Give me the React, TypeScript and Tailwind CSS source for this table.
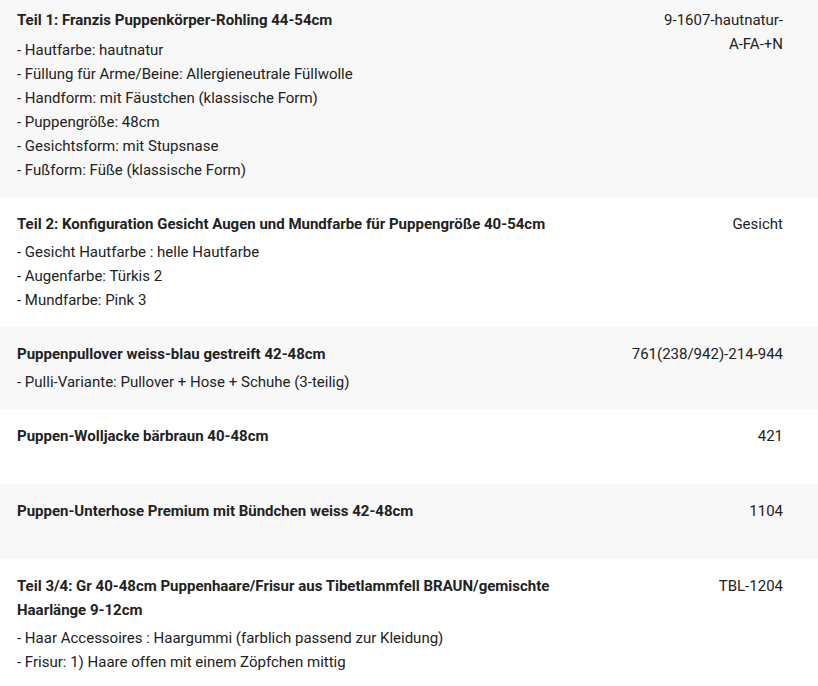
import React from "react";

type Row = { title: string; items: string[]; code: string; first?: boolean; nowrap?: boolean };

const rows: Row[] = [
  {
    title: "Teil 1: Franzis Puppenkörper-Rohling 44-54cm",
    items: [
      "- Hautfarbe: hautnatur",
      "- Füllung für Arme/Beine: Allergieneutrale Füllwolle",
      "- Handform: mit Fäustchen (klassische Form)",
      "- Puppengröße: 48cm",
      "- Gesichtsform: mit Stupsnase",
      "- Fußform: Füße (klassische Form)",
    ],
    code: "9-1607-hautnatur-A-FA-+N",
    first: true,
  },
  {
    title: "Teil 2: Konfiguration Gesicht Augen und Mundfarbe für Puppengröße 40-54cm",
    items: ["- Gesicht Hautfarbe : helle Hautfarbe", "- Augenfarbe: Türkis 2", "- Mundfarbe: Pink 3"],
    code: "Gesicht",
  },
  {
    title: "Puppenpullover weiss-blau gestreift 42-48cm",
    items: ["- Pulli-Variante: Pullover + Hose + Schuhe (3-teilig)"],
    code: "761(238/942)-214-944",
    nowrap: true,
  },
  { title: "Puppen-Wolljacke bärbraun 40-48cm", items: [], code: "421" },
  { title: "Puppen-Unterhose Premium mit Bündchen weiss 42-48cm", items: [], code: "1104" },
  {
    title: "Teil 3/4: Gr 40-48cm Puppenhaare/Frisur aus Tibetlammfell BRAUN/gemischte Haarlänge 9-12cm",
    items: [
      "- Haar Accessoires : Haargummi (farblich passend zur Kleidung)",
      "- Frisur: 1) Haare offen mit einem Zöpfchen mittig",
    ],
    code: "TBL-1204",
  },
];

export default function App() {
  return (
    <div
      className="w-[818px] h-[686px] overflow-hidden bg-white text-[15px] leading-[24px] text-[#222]"
      style={{ fontFamily: "Roboto, 'Liberation Sans', sans-serif" }}
    >
      {rows.map((r, i) => (
        <div
          key={i}
          className={`flex pl-[17px] pr-[35px] ${r.first ? "pt-[8px] pb-[15px]" : "pt-[15px] pb-[15px]"} ${
            i % 2 === 0 ? "bg-[#f8f8f8]" : "bg-white"
          }`}
        >
          <div className="flex-1 min-w-0 pr-[50px]">
            <div className={`font-bold ${r.first ? "mb-[6px]" : "mb-[4px]"}`}>{r.title}</div>
            {r.items.length > 0 ? (
              r.items.map((it, j) => <div key={j}>{it}</div>)
            ) : (
              <div className="h-[17px]" />
            )}
          </div>
          <div className={`w-[125px] min-w-min shrink-0 text-right ${r.nowrap ? "whitespace-nowrap" : ""}`}>
            {r.code}
          </div>
        </div>
      ))}
    </div>
  );
}
